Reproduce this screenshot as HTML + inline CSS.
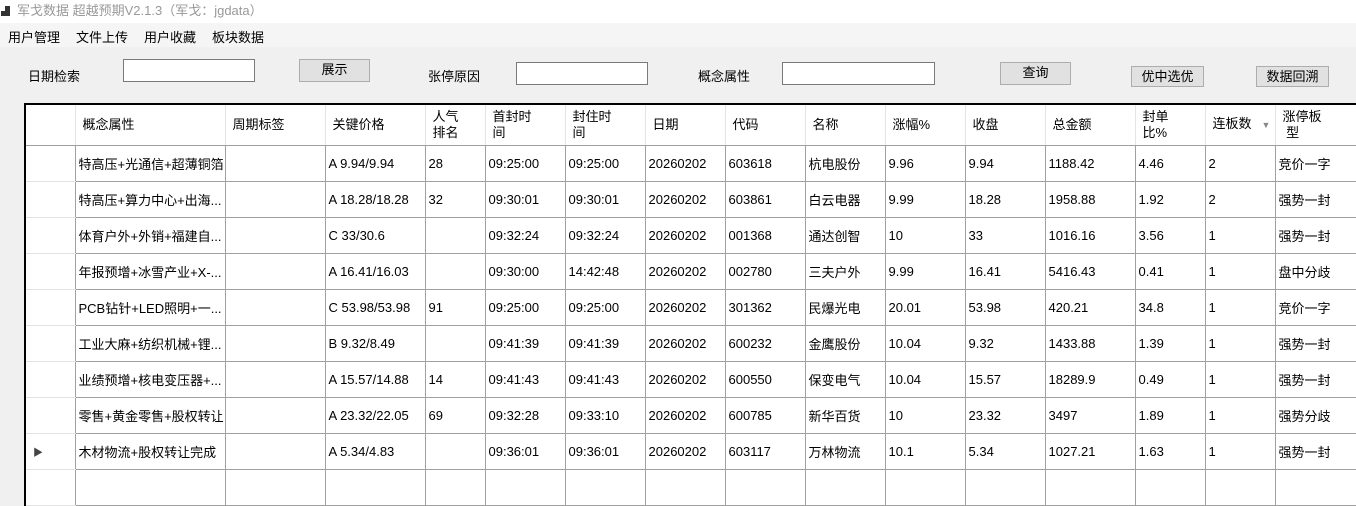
<!DOCTYPE html>
<html><head><meta charset="utf-8"><style>
*{margin:0;padding:0;box-sizing:border-box}
body{width:1356px;height:473px;overflow:hidden;background:#f0f0f0;font-family:"Liberation Sans","Noto Sans CJK SC",sans-serif;font-size:13px;color:#000;position:relative}
.title{position:absolute;left:0;top:0;width:1356px;height:23px;background:#fff;color:#999;font-size:13px;line-height:22px;padding-left:17px}
.ico{position:absolute;left:1px;top:6px;width:9px;height:10px}
.menu{position:absolute;top:23px;left:0;width:1356px;height:24px;background:#f5f5f5}
.menu span{position:absolute;top:4px}
.l{position:absolute}
.inp{position:absolute;background:#fff;border:1px solid #7a7a7a;height:23px}
.btn{position:absolute;background:#e1e1e1;border:1px solid #adadad;height:23px;text-align:center;line-height:20px}
table{position:absolute;left:24px;top:103px;width:1342px;border-collapse:collapse;table-layout:fixed;background:#fff;border-top:2px solid #000;border-left:2px solid #000}
td{border:1px solid #a0a0a0;height:36px;padding-left:3px;white-space:nowrap;overflow:hidden;vertical-align:middle}
th{font-weight:normal;text-align:left;border-right:1px solid #e5e5e5;border-bottom:1px solid #a0a0a0;height:41px;padding-left:7px;line-height:16px;vertical-align:middle;white-space:nowrap;overflow:hidden}
td.rh{border-left:none;border-right:1px solid #a0a0a0;border-top:1px solid #e3e3e3;border-bottom:1px solid #e3e3e3}
</style></head><body>
<div class="title"><svg class="ico" viewBox="0 0 9 10"><rect x="0" y="5" width="4" height="5" fill="#333"/><rect x="4" y="0" width="5" height="10" fill="#333"/></svg>军戈数据 超越预期V2.1.3（军戈：jgdata）</div>
<div class="menu"><span style="left:8px">用户管理</span><span style="left:76px">文件上传</span><span style="left:144px">用户收藏</span><span style="left:212px">板块数据</span></div>
<div class="l" style="left:28px;top:66px">日期检索</div>
<div class="inp" style="left:123px;top:59px;width:132px"></div>
<div class="btn" style="left:299px;top:59px;width:71px">展示</div>
<div class="l" style="left:428px;top:66px">张停原因</div>
<div class="inp" style="left:516px;top:62px;width:132px"></div>
<div class="l" style="left:698px;top:66px">概念属性</div>
<div class="inp" style="left:782px;top:62px;width:153px"></div>
<div class="btn" style="left:1000px;top:62px;width:71px">查询</div>
<div class="btn" style="left:1131px;top:66px;width:73px;height:21px;line-height:19px">优中选优</div>
<div class="btn" style="left:1256px;top:66px;width:73px;height:21px;line-height:19px">数据回溯</div>
<table>
<colgroup><col style="width:50px"><col style="width:150px"><col style="width:100px"><col style="width:100px"><col style="width:60px"><col style="width:80px"><col style="width:80px"><col style="width:80px"><col style="width:80px"><col style="width:80px"><col style="width:80px"><col style="width:80px"><col style="width:90px"><col style="width:70px"><col style="width:70px"><col style="width:92px"></colgroup>
<tr><th></th><th>概念属性</th><th>周期标签</th><th>关键价格</th><th>人气<br>排名</th><th>首封时<br>间</th><th>封住时<br>间</th><th>日期</th><th>代码</th><th>名称</th><th>涨幅%</th><th>收盘</th><th>总金额</th><th>封单<br>比%</th><th>连板数<span style="color:#888;font-size:9px;margin-left:10px">▼</span></th><th>涨停板<br>&nbsp;型</th></tr>
<tr><td class="rh"></td><td>特高压+光通信+超薄铜箔</td><td></td><td>A 9.94/9.94</td><td>28</td><td>09:25:00</td><td>09:25:00</td><td>20260202</td><td>603618</td><td>杭电股份</td><td>9.96</td><td>9.94</td><td>1188.42</td><td>4.46</td><td>2</td><td>竞价一字</td></tr>
<tr><td class="rh"></td><td>特高压+算力中心+出海...</td><td></td><td>A 18.28/18.28</td><td>32</td><td>09:30:01</td><td>09:30:01</td><td>20260202</td><td>603861</td><td>白云电器</td><td>9.99</td><td>18.28</td><td>1958.88</td><td>1.92</td><td>2</td><td>强势一封</td></tr>
<tr><td class="rh"></td><td>体育户外+外销+福建自...</td><td></td><td>C 33/30.6</td><td></td><td>09:32:24</td><td>09:32:24</td><td>20260202</td><td>001368</td><td>通达创智</td><td>10</td><td>33</td><td>1016.16</td><td>3.56</td><td>1</td><td>强势一封</td></tr>
<tr><td class="rh"></td><td>年报预增+冰雪产业+X-...</td><td></td><td>A 16.41/16.03</td><td></td><td>09:30:00</td><td>14:42:48</td><td>20260202</td><td>002780</td><td>三夫户外</td><td>9.99</td><td>16.41</td><td>5416.43</td><td>0.41</td><td>1</td><td>盘中分歧</td></tr>
<tr><td class="rh"></td><td>PCB钻针+LED照明+一...</td><td></td><td>C 53.98/53.98</td><td>91</td><td>09:25:00</td><td>09:25:00</td><td>20260202</td><td>301362</td><td>民爆光电</td><td>20.01</td><td>53.98</td><td>420.21</td><td>34.8</td><td>1</td><td>竞价一字</td></tr>
<tr><td class="rh"></td><td>工业大麻+纺织机械+锂...</td><td></td><td>B 9.32/8.49</td><td></td><td>09:41:39</td><td>09:41:39</td><td>20260202</td><td>600232</td><td>金鹰股份</td><td>10.04</td><td>9.32</td><td>1433.88</td><td>1.39</td><td>1</td><td>强势一封</td></tr>
<tr><td class="rh"></td><td>业绩预增+核电变压器+...</td><td></td><td>A 15.57/14.88</td><td>14</td><td>09:41:43</td><td>09:41:43</td><td>20260202</td><td>600550</td><td>保变电气</td><td>10.04</td><td>15.57</td><td>18289.9</td><td>0.49</td><td>1</td><td>强势一封</td></tr>
<tr><td class="rh"></td><td>零售+黄金零售+股权转让</td><td></td><td>A 23.32/22.05</td><td>69</td><td>09:32:28</td><td>09:33:10</td><td>20260202</td><td>600785</td><td>新华百货</td><td>10</td><td>23.32</td><td>3497</td><td>1.89</td><td>1</td><td>强势分歧</td></tr>
<tr><td class="rh" style="padding-left:7px;font-size:10px;color:#444">▶</td><td>木材物流+股权转让完成</td><td></td><td>A 5.34/4.83</td><td></td><td>09:36:01</td><td>09:36:01</td><td>20260202</td><td>603117</td><td>万林物流</td><td>10.1</td><td>5.34</td><td>1027.21</td><td>1.63</td><td>1</td><td>强势一封</td></tr>
<tr><td class="rh"></td><td></td><td></td><td></td><td></td><td></td><td></td><td></td><td></td><td></td><td></td><td></td><td></td><td></td><td></td><td></td></tr>
</table>
</body></html>
